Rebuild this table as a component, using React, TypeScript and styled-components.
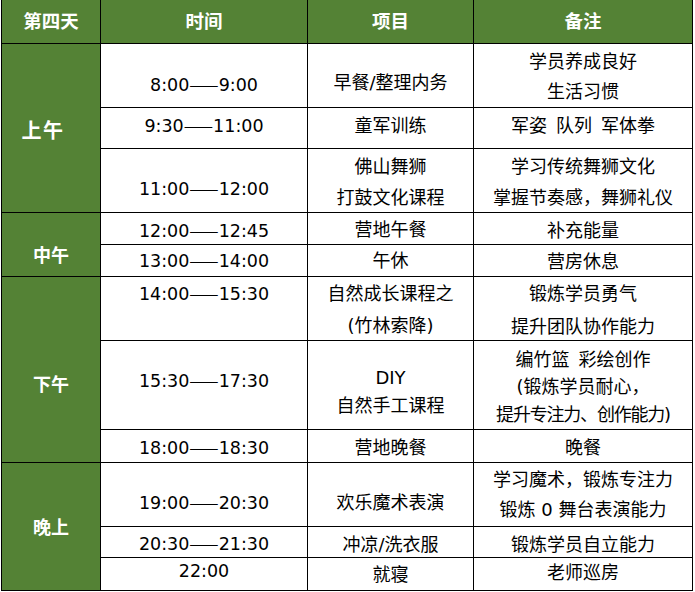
import React from "react";
import styled, { createGlobalStyle } from "styled-components";

const GlobalStyle = createGlobalStyle`
  html, body { margin: 0; padding: 0; background: #fff; }
  body {
    font-family: "DejaVu Sans", "Noto Sans CJK SC", sans-serif;
    color: #000;
  }
`;

const GREEN = "#548235";

const shift = (dy: number) =>
  dy >= 0 ? `padding-top: ${dy * 2}px;` : `padding-bottom: ${-dy * 2}px;`;

const Table = styled.div`
  display: grid;
  grid-template-columns: 98px 206px 165px 218px;
  grid-template-rows: 43px 63px 40px 63px 31px 31px 63px 88px 32px 63px 30px 32px;
  gap: 1px;
  background: #000;
  padding: 0 1px 1px 1px;
  margin-left: 1px;
  width: max-content;
`;

const HeadCell = styled.div`
  background: ${GREEN};
  color: #fff;
  font-weight: 700;
  font-size: 18.5px;
  display: flex;
  align-items: center;
  justify-content: center;
  padding-bottom: 3px;
`;

const SideCell = styled.div<{
  $row: number;
  $span: number;
  $dy: number;
  $dx: number;
  $ls: number;
  $size: number;
}>`
  grid-column: 1;
  grid-row: ${(p) => p.$row} / span ${(p) => p.$span};
  background: ${GREEN};
  color: #fff;
  font-weight: 700;
  font-size: ${(p) => p.$size}px;
  display: flex;
  align-items: center;
  justify-content: center;
  letter-spacing: ${(p) => p.$ls}px;
  padding-right: ${(p) => -p.$dx * 2}px;
  ${(p) => shift(p.$dy)}
`;

const Cell = styled.div<{ $row: number; $col: number; $dy: number; $lh: number; $size: number }>`
  grid-column: ${(p) => p.$col};
  grid-row: ${(p) => p.$row};
  background: #fff;
  display: flex;
  flex-direction: column;
  align-items: center;
  justify-content: center;
  font-size: ${(p) => p.$size}px;
  line-height: ${(p) => p.$lh}px;
  white-space: pre;
  ${(p) => shift(p.$dy)}
`;

const Line = styled.span<{ $tight?: boolean }>`
  display: block;
  letter-spacing: ${(p) => (p.$tight ? "-1.2px" : "normal")};
`;

const Dash = styled.span`
  font-family: "Noto Sans CJK SC", sans-serif;
`;

type Block = { lines: string[]; dy: number; lh?: number; tight?: number };
type Row = { time: string; tdy: number; proj: Block; notes: Block };

const rows: Row[] = [
  { time: "8:00——9:00", tdy: 9, proj: { lines: ["早餐/整理内务"], dy: 7.5 }, notes: { lines: ["学员养成良好", "生活习惯"], dy: 1.5, lh: 30 } },
  { time: "9:30——11:00", tdy: -2.5, proj: { lines: ["童军训练"], dy: -2.5 }, notes: { lines: ["军姿\u2002队列\u2002军体拳"], dy: -2 } },
  { time: "11:00——12:00", tdy: 8, proj: { lines: ["佛山舞狮", "打鼓文化课程"], dy: 1.5, lh: 31 }, notes: { lines: ["学习传统舞狮文化", "掌握节奏感，舞狮礼仪"], dy: 1, lh: 31 } },
  { time: "12:00——12:45", tdy: 1.5, proj: { lines: ["营地午餐"], dy: 1 }, notes: { lines: ["补充能量"], dy: 2 } },
  { time: "13:00——14:00", tdy: 0, proj: { lines: ["午休"], dy: 0.5 }, notes: { lines: ["营房休息"], dy: 1 } },
  { time: "14:00——15:30", tdy: -15.5, proj: { lines: ["自然成长课程之", "(竹林索降)"], dy: 1, lh: 32 }, notes: { lines: ["锻炼学员勇气", "提升团队协作能力"], dy: 1, lh: 33 } },
  { time: "15:30——17:30", tdy: -4.5, proj: { lines: ["DIY", "自然手工课程"], dy: 6.5, lh: 28 }, notes: { lines: ["编竹篮\u2002彩绘创作", "(锻炼学员耐心，", "提升专注力、创作能力)"], dy: 2, lh: 27.5, tight: 2 } },
  { time: "18:00——18:30", tdy: 1.5, proj: { lines: ["营地晚餐"], dy: 1.5 }, notes: { lines: ["晚餐"], dy: 2 } },
  { time: "19:00——20:30", tdy: 8, proj: { lines: ["欢乐魔术表演"], dy: 8 }, notes: { lines: ["学习魔术，锻炼专注力", "锻炼 0 舞台表演能力"], dy: 0, lh: 30 } },
  { time: "20:30——21:30", tdy: 1, proj: { lines: ["冲凉/洗衣服"], dy: 2.5 }, notes: { lines: ["锻炼学员自立能力"], dy: 2.5 } },
  { time: "22:00", tdy: -3.5, proj: { lines: ["就寝"], dy: 0.5 }, notes: { lines: ["老师巡房"], dy: -1.5 } },
];

const sides = [
  { label: "上午", row: 2, span: 3, dy: 1.5, dx: -8, ls: 1.5, size: 20 },
  { label: "中午", row: 5, span: 2, dy: 9.5, dx: 0, ls: 0, size: 18 },
  { label: "下午", row: 7, span: 3, dy: 13, dx: 0, ls: 0, size: 18 },
  { label: "晚上", row: 10, span: 3, dy: -1, dx: 0, ls: 0, size: 18 },
];

const headers = ["第四天", "时间", "项目", "备注"];

function TimeText({ value }: { value: string }) {
  const parts = value.split("——");
  if (parts.length < 2) return <>{value}</>;
  return (
    <span>
      {parts[0]}
      <Dash>——</Dash>
      {parts[1]}
    </span>
  );
}

export default function App() {
  return (
    <>
      <GlobalStyle />
      <Table>
        {headers.map((h) => (
          <HeadCell key={h}>{h}</HeadCell>
        ))}
        {sides.map((s) => (
          <SideCell
            key={s.label}
            $row={s.row}
            $span={s.span}
            $dy={s.dy}
            $dx={s.dx}
            $ls={s.ls}
            $size={s.size}
          >
            {s.label}
          </SideCell>
        ))}
        {rows.map((r, i) => {
          const row = i + 2;
          return (
            <React.Fragment key={r.time}>
              <Cell $row={row} $col={2} $dy={r.tdy} $lh={22} $size={17.5}>
                <TimeText value={r.time} />
              </Cell>
              <Cell $row={row} $col={3} $dy={r.proj.dy} $lh={r.proj.lh ?? 26} $size={18}>
                {r.proj.lines.map((l, j) => (
                  <Line key={j} $tight={r.proj.tight === j}>{l}</Line>
                ))}
              </Cell>
              <Cell $row={row} $col={4} $dy={r.notes.dy} $lh={r.notes.lh ?? 26} $size={18}>
                {r.notes.lines.map((l, j) => (
                  <Line key={j} $tight={r.notes.tight === j}>{l}</Line>
                ))}
              </Cell>
            </React.Fragment>
          );
        })}
      </Table>
    </>
  );
}
